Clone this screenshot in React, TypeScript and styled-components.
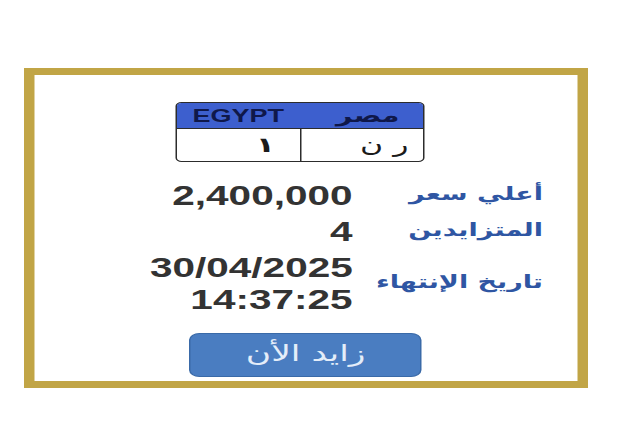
import { Fragment } from "react";
import styled, { createGlobalStyle } from "styled-components";

// the screenshot is stretched sideways, so the card is laid out narrow and widened
const STRETCH = 1.5;

const GlobalStyle = createGlobalStyle`
  html, body {
    margin: 0;
    padding: 0;
    background: #ffffff;
  }
  body {
    font-family: "Liberation Sans", Arial, sans-serif;
    overflow: hidden;
  }
`;

const Stage = styled.div`
  width: ${640 / STRETCH}px;
  height: 427px;
  transform: scaleX(${STRETCH});
  transform-origin: left top;
  padding: 68px 0 0 15.5px;
  box-sizing: border-box;
`;

const Frame = styled.div`
  width: 376.5px;
  height: 320px;
  box-sizing: border-box;
  border: 7px solid #c1a546;
  background: #ffffff;
  display: flex;
  flex-direction: column;
  align-items: center;
  padding-top: 27px;
`;

const Plate = styled.div`
  width: 166px;
  height: 60px;
  box-sizing: border-box;
  border: 1.5px solid #2c2c2c;
  border-radius: 4px;
  overflow: hidden;
  display: flex;
  flex-direction: column;
  margin-left: -7px;
`;

const PlateHead = styled.div`
  height: 25px;
  background: #3d5fce;
  border-bottom: 1.5px solid #2c2c2c;
  display: flex;
  align-items: center;
  justify-content: space-between;
  padding: 0 16px 0 10px;
`;

const Country = styled.span<{ $arabic?: boolean }>`
  font-family: ${(p) =>
    p.$arabic ? `"DejaVu Sans", sans-serif` : `"Liberation Sans", Arial, sans-serif`};
  font-weight: 700;
  font-size: ${(p) => (p.$arabic ? "19px" : "18px")};
  color: #0f184a;
  line-height: 1;
`;

const PlateBody = styled.div`
  flex: 1;
  display: grid;
  grid-template-columns: 1fr 1fr;
`;

const PlateCell = styled.div<{ $pad: number; $bold?: boolean }>`
  display: flex;
  align-items: center;
  justify-content: flex-end;
  padding-right: ${(p) => p.$pad}px;
  font-family: "DejaVu Sans", sans-serif;
  font-weight: ${(p) => (p.$bold ? 700 : 400)};
  font-size: 21px;
  color: #1b1b1b;
  & + & {
    border-left: 1.5px solid #2c2c2c;
  }
`;

const Info = styled.div`
  align-self: stretch;
  display: grid;
  grid-template-columns: 114px 135px;
  column-gap: 13px;
  row-gap: 4px;
  justify-content: start;
  padding-right: 23px;
  margin-top: 18px;
  direction: rtl;
`;

const Label = styled.div`
  font-family: "DejaVu Sans", sans-serif;
  font-weight: 700;
  font-size: 18px;
  color: #2f56a3;
  display: flex;
  align-items: center;
  transform: translateY(-3px);
`;

const Value = styled.div`
  direction: ltr;
  text-align: right;
  font-family: "Liberation Sans", Arial, sans-serif;
  font-weight: 700;
  font-size: 27px;
  line-height: 32px;
  color: #333333;
`;

const BidButton = styled.button`
  margin-top: 17px;
  width: 155px;
  height: 44px;
  border: 1px solid #3a6aa8;
  border-radius: 7px;
  background: #4a7dc1;
  color: #e4edf9;
  font-family: "DejaVu Sans", sans-serif;
  font-size: 23px;
  font-weight: 400;
  padding: 0 0 4px;
  cursor: pointer;
`;

const rows = [
  { label: "أعلي سعر", values: ["2,400,000"] },
  { label: "المتزايدين", values: ["4"] },
  { label: "تاريخ الإنتهاء", values: ["30/04/2025", "14:37:25"] },
];

export default function App() {
  return (
    <>
      <GlobalStyle />
      <Stage>
        <Frame>
          <Plate>
            <PlateHead>
              <Country>EGYPT</Country>
              <Country $arabic>مصر</Country>
            </PlateHead>
            <PlateBody>
              <PlateCell $pad={17} $bold>
                ١
              </PlateCell>
              <PlateCell $pad={10}>ر ن</PlateCell>
            </PlateBody>
          </Plate>
          <Info>
            {rows.map((r) => (
              <Fragment key={r.label}>
                <Label>{r.label}</Label>
                <Value>
                  {r.values.map((v) => (
                    <div key={v}>{v}</div>
                  ))}
                </Value>
              </Fragment>
            ))}
          </Info>
          <BidButton>زايد الأن</BidButton>
        </Frame>
      </Stage>
    </>
  );
}
